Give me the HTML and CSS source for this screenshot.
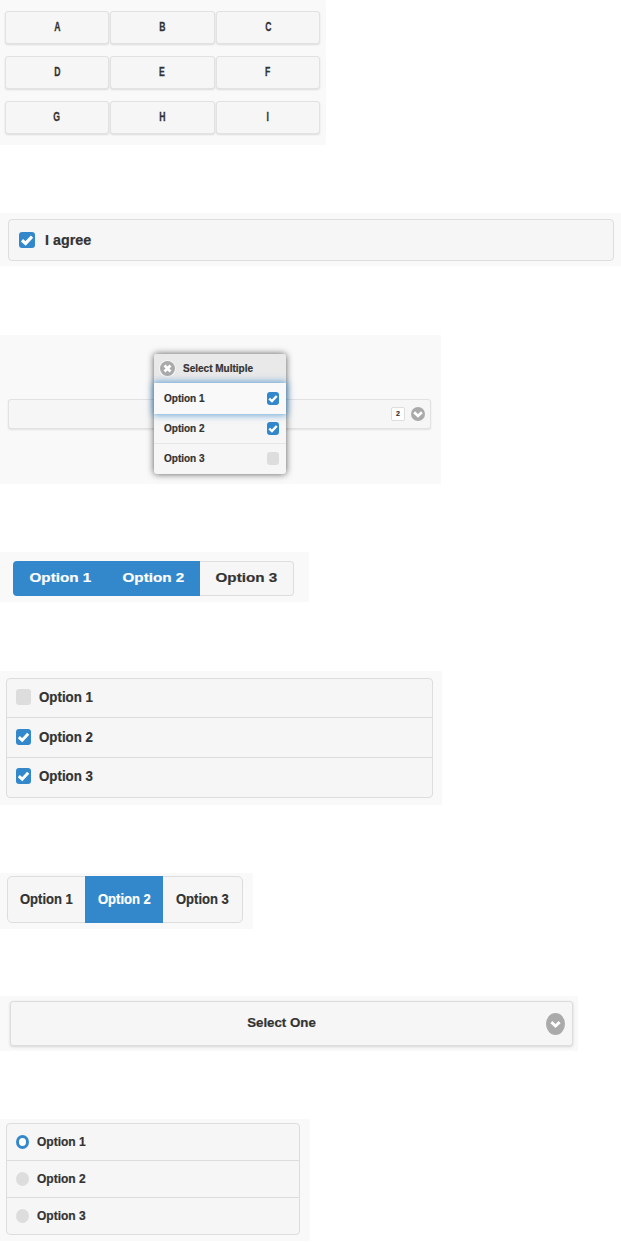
FILE: index.html
```html
<!DOCTYPE html>
<html lang="en">
<head>
  <meta charset="UTF-8" />
  <title>Form Controls</title>
  <link rel="stylesheet" href="styles.css">
</head>
<body>

  <svg class="defs" width="0" height="0">
    <symbol id="tick" viewBox="0 0 16 16">
      <path d="M3 8.2 6.6 11.4 13 4.6" fill="none" stroke="#fff" stroke-width="3.2"/>
    </symbol>
    <symbol id="chevron" viewBox="0 0 16 16">
      <path d="M3.6 6 8 10.2 12.4 6" fill="none" stroke="#fff" stroke-width="3"/>
    </symbol>
    <symbol id="cross" viewBox="0 0 16 16">
      <path d="M4.8 4.8 11.2 11.2M11.2 4.8 4.8 11.2" fill="none" stroke="#fff" stroke-width="3"/>
    </symbol>
  </svg>

  <section class="panel grid-panel">
    <div class="key-row"><button><b>A</b></button><button><b>B</b></button><button><b>C</b></button></div>
    <div class="key-row"><button><b>D</b></button><button><b>E</b></button><button><b>F</b></button></div>
    <div class="key-row"><button><b>G</b></button><button><b>H</b></button><button><b>I</b></button></div>
  </section>

  <section class="panel agree-panel">
    <div class="agree">
      <span class="check check-on"><svg><use href="#tick"/></svg></span>
      <span>I agree</span>
    </div>
  </section>

  <section class="panel multi-panel">
    <div class="multi-field">
      <span class="count">2</span>
      <span class="arrow arrow-small"><svg><use href="#chevron"/></svg></span>
    </div>
    <div class="popup">
      <div class="popup-head">
        <span class="close"><svg><use href="#cross"/></svg></span>
        <span>Select Multiple</span>
      </div>
      <div class="popup-item popup-active">
        <span>Option 1</span>
        <span class="check check-small check-on"><svg><use href="#tick"/></svg></span>
      </div>
      <div class="popup-item">
        <span>Option 2</span>
        <span class="check check-small check-on"><svg><use href="#tick"/></svg></span>
      </div>
      <div class="popup-item">
        <span>Option 3</span>
        <span class="check check-small"></span>
      </div>
    </div>
  </section>

  <section class="panel wide-seg-panel">
    <div class="wide-seg">
      <span class="seg-on seg-a"><b>Option 1</b></span>
      <span class="seg-on seg-b"><b>Option 2</b></span>
      <span class="seg-c"><b>Option 3</b></span>
    </div>
  </section>

  <section class="panel checks-panel">
    <div class="checks">
      <div class="checks-row"><span class="check"></span><b>Option 1</b></div>
      <div class="checks-row"><span class="check check-on"><svg><use href="#tick"/></svg></span><b>Option 2</b></div>
      <div class="checks-row"><span class="check check-on"><svg><use href="#tick"/></svg></span><b>Option 3</b></div>
    </div>
  </section>

  <section class="panel seg-panel">
    <div class="seg">
      <span><b>Option 1</b></span>
      <span class="seg-active"><b>Option 2</b></span>
      <span><b>Option 3</b></span>
    </div>
  </section>

  <section class="panel select-panel">
    <div class="select">
      <span>Select One</span>
      <span class="arrow"><svg><use href="#chevron"/></svg></span>
    </div>
  </section>

  <section class="panel radio-panel">
    <div class="radios">
      <div class="radio-row"><span class="radio radio-on"></span><span>Option 1</span></div>
      <div class="radio-row"><span class="radio"></span><span>Option 2</span></div>
      <div class="radio-row"><span class="radio"></span><span>Option 3</span></div>
    </div>
  </section>

</body>
</html>
```

FILE: styles.css
```css
* {
  box-sizing: border-box;
}

body {
  font-family: 'Liberation Sans', Arial, sans-serif;
  font-weight: bold;
  margin: 0;
  background: #fff;
  color: #333;
  height: 1242px;
  overflow: hidden;
  -webkit-text-stroke: 0.2px;
}

.defs {
  position: absolute;
}

.panel {
  background: #f9f9f9;
}

svg {
  display: block;
  width: 100%;
  height: 100%;
}

/* the source text is squeezed or stretched, so labels get scaled on their own box */
b {
  display: inline-block;
}

/* letter grid */
.grid-panel {
  width: 326px;
  height: 145px;
  padding: 11px 6px 0 5px;
}

.key-row {
  display: grid;
  grid-template-columns: 104px 105px 104px;
  column-gap: 1px;
  margin-bottom: 12px;
}

.key-row button {
  height: 33px;
  background: #f6f6f6;
  border: 1px solid #e2e2e2;
  border-radius: 3px;
  box-shadow: 0 1px 2px rgba(0,0,0,0.12);
  color: #333;
  font-family: 'Liberation Sans', Arial, sans-serif;
  font-size: 12px;
  padding: 0 0 1px;
  -webkit-text-stroke: 0.3px;
}

.key-row b {
  transform: scaleX(0.72);
}

/* checkbox */
.check {
  display: block;
  flex: none;
  width: 16px;
  height: 16px;
  border-radius: 3px;
  background: #ddd;
}

.check-on {
  background: #3388cc;
}

.check-small {
  width: 12px;
  height: 13px;
}

.agree-panel {
  height: 53px;
  margin-top: 68px;
  padding: 6px 7px 5px 8px;
}

.agree {
  display: flex;
  align-items: center;
  gap: 10px;
  height: 42px;
  padding: 0 0 1px 10px;
  background: #f6f6f6;
  border: 1px solid #ddd;
  border-radius: 4px;
  font-size: 14.3px;
}

/* multi select */
.multi-panel {
  position: relative;
  width: 441px;
  height: 149px;
  margin-top: 69px;
  padding: 64px 10px 0 8px;
}

.multi-field {
  display: flex;
  align-items: center;
  justify-content: flex-end;
  gap: 6px;
  height: 30px;
  padding-right: 5px;
  background: #f6f6f6;
  border: 1px solid #e2e2e2;
  border-radius: 3px;
  box-shadow: 0 1px 2px rgba(0,0,0,0.1);
}

.count {
  width: 14px;
  height: 14px;
  background: #fff;
  border: 1px solid #ddd;
  border-radius: 2px;
  font-size: 7px;
  line-height: 12px;
  text-align: center;
}

.arrow {
  display: block;
  flex: none;
  width: 19px;
  height: 22px;
  border-radius: 50%;
  background: #aaa;
  padding: 2px;
}

.arrow-small {
  width: 14px;
  height: 14px;
  padding: 0;
}

.popup {
  position: absolute;
  left: 154px;
  top: 19px;
  width: 132px;
  height: 120px;
  background: #f6f6f6;
  border-radius: 3px;
  box-shadow: 0 0 7px rgba(0,0,0,0.65);
  font-size: 10px;
}

.popup-head {
  display: flex;
  align-items: center;
  gap: 8px;
  height: 29px;
  padding-left: 6px;
  background: #e9e9e9;
  border-radius: 3px 3px 0 0;
}

.close {
  display: block;
  width: 15px;
  height: 15px;
  border-radius: 50%;
  background: #aaa;
  box-shadow: 0 0 0 1px #f4f4f4;
}

.popup-item {
  display: flex;
  align-items: center;
  justify-content: space-between;
  height: 30px;
  padding: 0 7px 0 10px;
  border-bottom: 1px solid #e6e6e6;
}

.popup-item:last-child {
  padding-bottom: 2px;
  border-bottom: none;
}

.popup-active {
  position: relative;
  height: 31px;
  background: #f9f9f9;
  border-bottom: none;
  box-shadow: 0 0 7px 1px rgba(51,136,204,0.75);
}

/* wide segmented control */
.wide-seg-panel {
  width: 309px;
  height: 50px;
  margin-top: 68px;
  padding: 9px 0 0 13px;
}

.wide-seg {
  display: flex;
  width: 281px;
  height: 35px;
  font-size: 13px;
}

.wide-seg span {
  display: flex;
  align-items: center;
  justify-content: center;
  padding-bottom: 2px;
}

.wide-seg b {
  transform: scaleX(1.17);
}

.seg-on {
  background: #3388cc;
  color: #fff;
}

.seg-a {
  width: 94px;
  border-radius: 4px 0 0 4px;
}

.seg-b {
  width: 93px;
}

.seg-c {
  width: 94px;
  background: #f6f6f6;
  border: 1px solid #ddd;
  border-left: none;
  border-radius: 0 4px 4px 0;
}

/* checkbox list */
.checks-panel {
  width: 442px;
  height: 134px;
  margin-top: 69px;
  padding: 7px 9px 0 6px;
}

.checks {
  height: 120px;
  background: #f6f6f6;
  border: 1px solid #ddd;
  border-radius: 4px;
  font-size: 14px;
}

.checks-row {
  display: flex;
  align-items: center;
  gap: 8px;
  height: 39px;
  padding: 0 0 2px 9px;
  border-bottom: 1px solid #ddd;
}

.checks-row:nth-child(2) {
  height: 40px;
}

.checks-row:last-child {
  padding-bottom: 3px;
  border-bottom: none;
}

.checks-row .check {
  width: 15px;
}

.checks-row b {
  transform: scaleX(0.95);
  transform-origin: left;
}

/* segmented control */
.seg-panel {
  width: 253px;
  height: 56px;
  margin-top: 68px;
  padding: 3px 0 0 7px;
}

.seg {
  display: flex;
  width: 236px;
  height: 47px;
  background: #f6f6f6;
  border: 1px solid #ddd;
  border-radius: 5px;
  font-size: 15px;
}

.seg span {
  width: 77px;
  display: flex;
  align-items: center;
  justify-content: center;
  padding-bottom: 2px;
}

.seg span:last-child {
  width: 79px;
}

.seg b {
  transform: scaleX(0.87);
}

.seg .seg-active {
  width: 78px;
  margin: -1px 0;
  background: #3388cc;
  color: #fff;
}

/* select */
.select-panel {
  width: 578px;
  height: 55px;
  margin-top: 67px;
  padding: 5px 5px 0 10px;
}

.select {
  position: relative;
  display: flex;
  align-items: center;
  justify-content: center;
  height: 45px;
  padding: 0 20px 3px 0;
  background: #f6f6f6;
  border: 1px solid #ddd;
  border-radius: 3px;
  box-shadow: 0 1px 3px rgba(0,0,0,0.15);
  font-size: 13.3px;
}

.select .arrow {
  position: absolute;
  right: 7px;
  top: 11px;
}

/* radio list */
.radio-panel {
  width: 310px;
  height: 122px;
  margin-top: 68px;
  padding: 4px 10px 0 6px;
}

.radios {
  height: 112px;
  background: #f6f6f6;
  border: 1px solid #ddd;
  border-radius: 4px;
  font-size: 12px;
}

.radio-row {
  display: flex;
  align-items: center;
  gap: 8px;
  height: 37px;
  padding-left: 9px;
  border-bottom: 1px solid #ddd;
}

.radio-row:last-child {
  padding-bottom: 2px;
  border-bottom: none;
}

.radio {
  display: block;
  width: 13px;
  height: 14px;
  border-radius: 50%;
  background: #ddd;
}

.radio-on {
  background: #fff;
  border: 3.5px solid #3388cc;
}
```
